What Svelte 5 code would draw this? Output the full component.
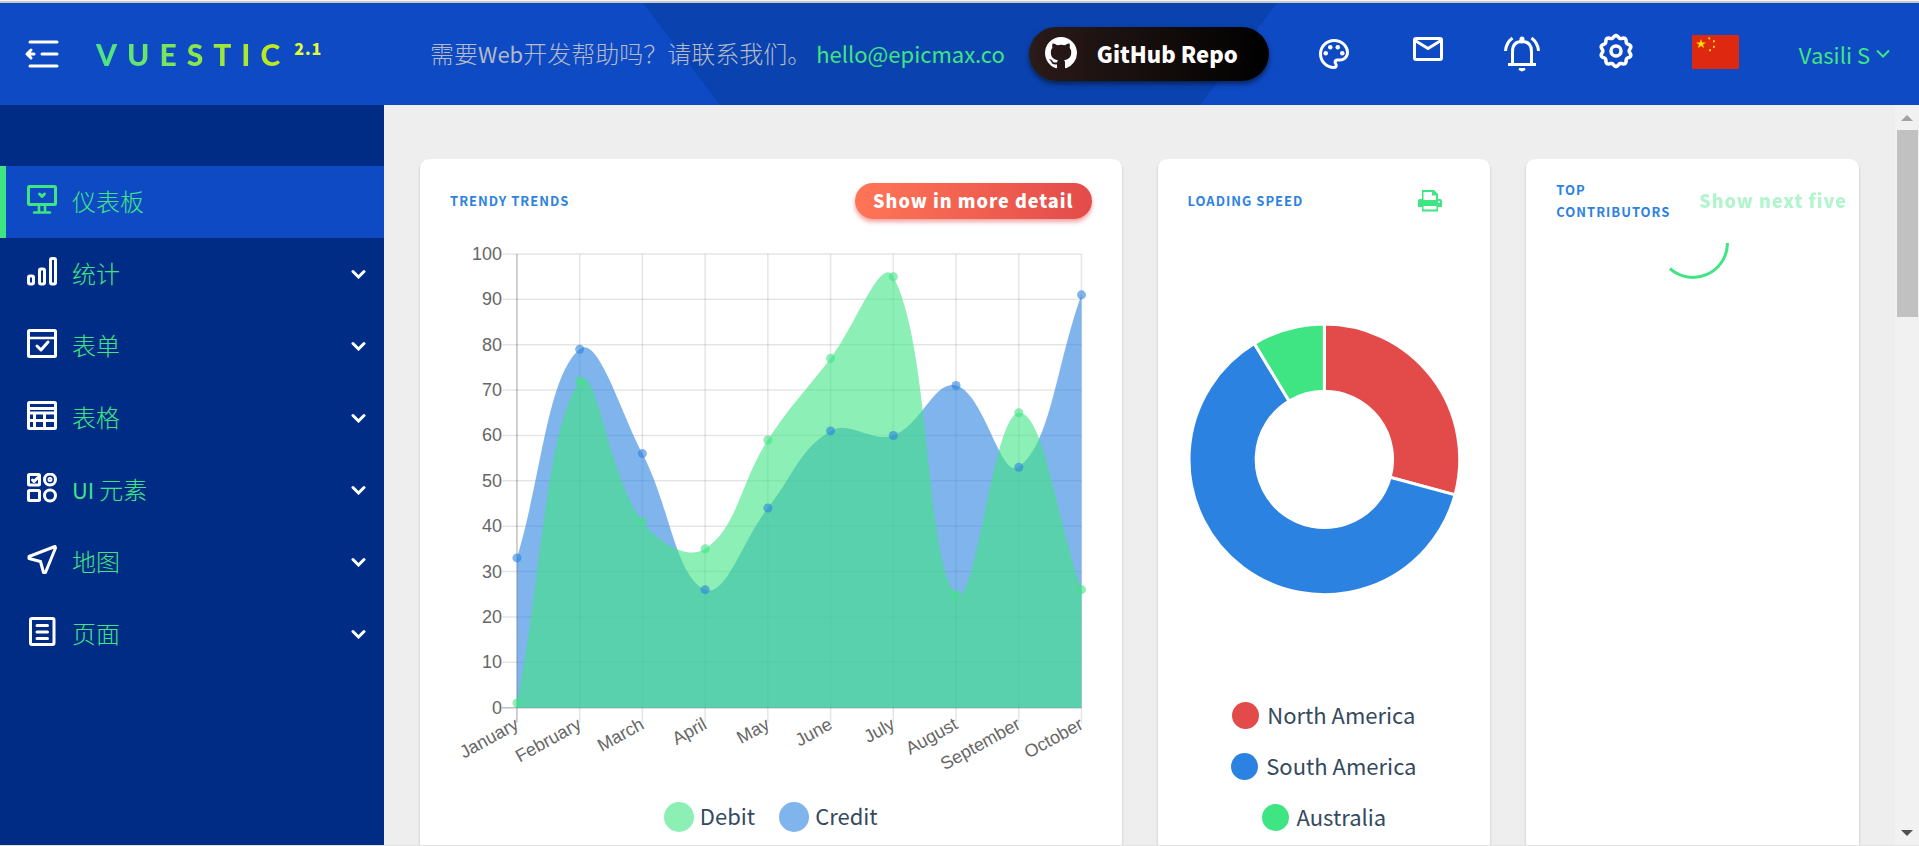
<script>
    const menu = [
        { label: '仪表板', icon: 'dashboard', active: true },
        { label: '统计', icon: 'stats' },
        { label: '表单', icon: 'forms' },
        { label: '表格', icon: 'tables' },
        { latin: 'UI ', label: '元素', icon: 'ui' },
        { label: '地图', icon: 'maps' },
        { label: '页面', icon: 'pages' }
    ];

    const months = ['January', 'February', 'March', 'April', 'May', 'June', 'July', 'August', 'September', 'October'];
    const credit = [33, 79, 56, 26, 44, 61, 60, 71, 53, 91];
    const debit = [1, 72, 41, 35, 59, 77, 95, 25, 65, 26];

    const regions = [
        { name: 'North America', value: 2478, color: '#e34b4a' },
        { name: 'South America', value: 5267, color: '#2c82e0' },
        { name: 'Australia', value: 734, color: '#40e583' }
    ];

    // Plot area inside the 642 x 547 chart
    const left = 67;
    const right = 632;
    const top = 11;
    const bottom = 465;
    const ticks = [0, 10, 20, 30, 40, 50, 60, 70, 80, 90, 100];

    const px = (i) => left + (i * (right - left)) / (months.length - 1);
    const py = (v) => bottom - (v * (bottom - top)) / 100;
    const clamp = (v, lo, hi) => Math.min(hi, Math.max(lo, v));

    // Smooth area, control points are kept inside the plot
    function area(values, tension = 0.4) {
        const pts = values.map((v, i) => [px(i), py(v)]);
        const ctrl = pts.map((p, i) => {
            const prev = pts[i - 1] ?? p;
            const next = pts[i + 1] ?? p;
            const d1 = Math.hypot(p[0] - prev[0], p[1] - prev[1]);
            const d2 = Math.hypot(next[0] - p[0], next[1] - p[1]);
            const a = (tension * d1) / (d1 + d2);
            const b = (tension * d2) / (d1 + d2);
            const cap = (x, y) => [clamp(x, left, right), clamp(y, top, bottom)];
            return {
                before: cap(p[0] - a * (next[0] - prev[0]), p[1] - a * (next[1] - prev[1])),
                after: cap(p[0] + b * (next[0] - prev[0]), p[1] + b * (next[1] - prev[1]))
            };
        });
        let d = `M${left} ${bottom}L${pts[0]}`;
        for (let i = 1; i < pts.length; i++) {
            d += `C${ctrl[i - 1].after} ${ctrl[i].before} ${pts[i]}`;
        }
        return d + `L${right} ${bottom}Z`;
    }

    function donut(items, r = 135, hole = 68, c = 137) {
        const total = items.reduce((sum, item) => sum + item.value, 0);
        let angle = -Math.PI / 2;
        const at = (radius, a) => `${c + radius * Math.cos(a)} ${c + radius * Math.sin(a)}`;
        return items.map((item) => {
            const end = angle + (item.value / total) * Math.PI * 2;
            const large = end - angle > Math.PI ? 1 : 0;
            const d = `M${at(r, angle)}A${r} ${r} 0 ${large} 1 ${at(r, end)}L${at(hole, end)}A${hole} ${hole} 0 ${large} 0 ${at(hole, angle)}Z`;
            angle = end;
            return { d, color: item.color };
        });
    }

    const slices = donut(regions);

    // Wavy outline of the settings icon
    const gear = Array.from({ length: 120 }, (_, i) => {
        const a = (i / 120) * Math.PI * 2;
        const r = 14.3 + 1.2 * Math.cos(10 * (a - Math.PI / 2));
        return `${(18 + r * Math.cos(a)).toFixed(2)},${(18 + r * Math.sin(a)).toFixed(2)}`;
    }).join(' ');
</script>

<div class="page">
    <div class="window-edge"></div>

    <header>
        <svg class="shape" viewBox="0 0 634 102" preserveAspectRatio="none" aria-hidden="true">
            <path d="M0 0H634L557 102H77Z" fill="#0a43af" />
        </svg>

        <button class="icon-button toggle" aria-label="Menu">
            <svg width="36" height="36" viewBox="0 0 36 36" fill="none" stroke="#fff" stroke-width="3" stroke-linecap="round">
                <path d="M6 6H33M18 18H33M6 30H33" />
                <path d="M3 18H10M7 14L3 18L7 22" stroke-linejoin="round" />
            </svg>
        </button>
        <a class="logo" href="/"><span class="word">VUESTIC</span><sup>2.1</sup></a>

        <p class="help">
            <span class="cjk">需要</span>Web<span class="cjk">开发帮助吗？请联系我们。</span>
            <a href="mailto:hello@epicmax.co">hello@epicmax.co</a>
        </p>

        <button class="github">
            <svg width="32" height="32" viewBox="0 0 16 16" fill="#fff">
                <path d="M8 0C3.58 0 0 3.58 0 8c0 3.54 2.29 6.53 5.47 7.59.4.07.55-.17.55-.38 0-.19-.01-.82-.01-1.49-2.01.37-2.53-.49-2.69-.94-.09-.23-.48-.94-.82-1.13-.28-.15-.68-.52-.01-.53.63-.01 1.08.58 1.23.82.72 1.21 1.87.87 2.33.66.07-.52.28-.87.51-1.07-1.78-.2-3.64-.89-3.64-3.95 0-.87.31-1.59.82-2.15-.08-.2-.36-1.02.08-2.12 0 0 .67-.21 2.2.82.64-.18 1.32-.27 2-.27.68 0 1.36.09 2 .27 1.53-1.04 2.2-.82 2.2-.82.44 1.1.16 1.92.08 2.12.51.56.82 1.27.82 2.15 0 3.07-1.87 3.75-3.65 3.95.29.25.54.73.54 1.48 0 1.07-.01 1.93-.01 2.2 0 .21.15.46.55.38A8.013 8.013 0 0016 8c0-4.42-3.58-8-8-8z" />
            </svg>
            GitHub Repo
        </button>

        <div class="actions">
            <button class="icon-button" aria-label="Theme">
                <svg width="36" height="36" viewBox="0 0 24 24" fill="#fff">
                    <path d="M12 22C6.490 22 2 17.510 2 12S6.490 2 12 2s10 4.040 10 9c0 3.310-2.690 6-6 6h-1.770c-.28 0-.5.22-.5.5 0 .12.05.23.13.33.41.47.64 1.060.64 1.670A2.500 2.500 0 0112 22zm0-18c-4.410 0-8 3.590-8 8s3.590 8 8 8c.28 0 .5-.22.5-.5a.54.54 0 00-.14-.35c-.41-.46-.63-1.050-.63-1.650a2.500 2.500 0 012.500-2.500H16c2.210 0 4-1.790 4-4 0-3.860-3.590-7-8-7z" />
                    <circle cx="6.500" cy="11.500" r="1.500" />
                    <circle cx="9.500" cy="7.500" r="1.500" />
                    <circle cx="14.500" cy="7.500" r="1.500" />
                    <circle cx="17.500" cy="11.500" r="1.500" />
                </svg>
            </button>
            <button class="icon-button" aria-label="Messages">
                <svg width="36" height="36" viewBox="0 0 36 36" fill="none" stroke="#fff" stroke-width="3">
                    <rect x="4.500" y="2.500" width="27" height="21" rx="1.500" />
                    <path d="M5 4.500L18 12.500L31 4.500" />
                </svg>
            </button>
            <button class="icon-button" aria-label="Notifications">
                <svg width="38" height="38" viewBox="0 0 38 38" fill="none" stroke="#fff" stroke-width="3">
                    <path d="M5 29.500H33M9.500 29V16.500C9.500 10 13 6.500 19 6.500S28.500 10 28.500 16.500V29" />
                    <path d="M2.500 16C3 10 5.500 6 9.500 3M35.500 16C35 10 32.500 6 28.500 3" />
                    <path d="M19 4V6" stroke-width="5" stroke-linecap="round" />
                    <path d="M16 34H22L19 35.500Z" fill="#fff" stroke-width="2" />
                </svg>
            </button>
            <button class="icon-button" aria-label="Settings">
                <svg width="36" height="42" viewBox="0 0 36 42" fill="none" stroke="#fff" stroke-width="3.500" stroke-linejoin="round">
                    <polygon points={gear} />
                    <circle cx="18" cy="18" r="5" />
                </svg>
            </button>
            <button class="icon-button flag" aria-label="Language">
                <svg width="47" height="38" viewBox="0 0 47 38">
                    <rect width="47" height="34" fill="#de2910" />
                    <path d="M9 4L10.200 7.400H14L11 9.600L12.100 13L9 10.900L5.900 13L7 9.600L4 7.400H7.800Z" fill="#ffde00" />
                    <g fill="#ffde00">
                        <path d="M17.500 2l1 2-1.500.8-1-2zM21 5.500l1.500-.5.5 2-2 .5zM21 11l1.500-.5.5 2-2 .5zM17 14.500l1.800-.5.2 2-2 .3z" />
                    </g>
                </svg>
            </button>
        </div>

        <button class="user">
            Vasili S
            <svg width="14" height="10" viewBox="0 0 14 10" fill="none" stroke="#40e583" stroke-width="2">
                <path d="M1 1.500L7 7.500L13 1.500" />
            </svg>
        </button>
    </header>

    <div class="body">
        <nav>
            {#each menu as item}
                <a class="item" class:active={item.active} href="#{item.icon}">
                    <svg width="30" height="30" viewBox="0 0 30 30" fill="none" stroke="currentColor" stroke-width="3" stroke-linejoin="round" stroke-linecap="round">
                        {#if item.icon === 'dashboard'}
                            <rect x="1.500" y="1.500" width="27" height="18" rx="1" />
                            <path d="M12 21V27M18 21V27M7 27.500H23" stroke-width="2.600" />
                            <path d="M12.500 9L15 11.500L17.500 9" />
                        {:else if item.icon === 'stats'}
                            <rect x="1.500" y="19" width="5" height="8" rx="1.500" />
                            <rect x="12.500" y="12" width="5" height="15" rx="1.500" />
                            <rect x="23.500" y="1.500" width="5" height="25.500" rx="1.500" />
                        {:else if item.icon === 'forms'}
                            <rect x="1.500" y="1.500" width="27" height="26" rx="1" />
                            <path d="M2 9H28" stroke-width="2.500" />
                            <path d="M10 17L14 21L21 13" />
                        {:else if item.icon === 'tables'}
                            <rect x="1.500" y="1.500" width="27" height="26" rx="1" />
                            <path d="M2 7.500H28M2 12H28M2 19.500H28M7.500 12V27M17.500 12V27" stroke-width="3" />
                        {:else if item.icon === 'ui'}
                            <rect x="1.500" y="1.500" width="11" height="10.500" rx="1" />
                            <path d="M5.500 7L7 8.500L11 4.500" />
                            <circle cx="23" cy="6.500" r="5.500" />
                            <circle cx="23" cy="6.500" r="1" />
                            <rect x="1.500" y="17.500" width="11" height="10" rx="1" />
                            <circle cx="23" cy="22.500" r="5.500" />
                        {:else if item.icon === 'maps'}
                            <path d="M28 1.500L2 11.500V13.500L13.500 16.500L16.500 27.500H18.500L28.500 3Z" />
                        {:else}
                            <rect x="3.500" y="1.500" width="23.500" height="26" rx="1.500" />
                            <path d="M10 8.500H20.500M10 15H20.500M10 21.500H20.500" />
                        {/if}
                    </svg>
                    <span class="label">{#if item.latin}<span class="latin">{item.latin}</span>{/if}{item.label}</span>
                    {#if !item.active}
                        <svg class="arrow" width="15" height="10" viewBox="0 0 15 10" fill="none" stroke="#fff" stroke-width="3" stroke-linecap="round">
                            <path d="M2 2.500L7.500 8L13 2.500" />
                        </svg>
                    {/if}
                </a>
            {/each}
        </nav>

        <main>
            <section class="card wide">
                <div class="card-header">
                    <h2>Trendy trends</h2>
                    <button class="detail">Show in more detail</button>
                </div>
                <svg class="chart" viewBox="0 0 642 547">
                    <g stroke="rgba(0, 0, 0, 0.1)" stroke-width="1.500">
                        {#each ticks as t}
                            <path d="M{left - 15} {py(t)}H{right}" stroke={t === 0 ? 'rgba(0, 0, 0, 0.25)' : undefined} />
                        {/each}
                        {#each months as _, i}
                            <path d="M{px(i)} {top}V{bottom + 15}" stroke={i === 0 ? 'rgba(0, 0, 0, 0.25)' : undefined} />
                        {/each}
                    </g>
                    <path d={area(credit)} fill="#2c82e0" fill-opacity="0.6" />
                    <path d={area(debit)} fill="#40e583" fill-opacity="0.6" />
                    {#each credit as v, i}
                        <circle cx={px(i)} cy={py(v)} r="4.500" fill="#2c82e0" fill-opacity="0.6" />
                    {/each}
                    {#each debit as v, i}
                        <circle cx={px(i)} cy={py(v)} r="4.500" fill="#40e583" fill-opacity="0.6" />
                    {/each}
                    <g class="axis">
                        {#each ticks as t}
                            <text x={left - 15} y={py(t) + 6}>{t}</text>
                        {/each}
                        {#each months as month, i}
                            <text transform="translate({px(i)} {bottom + 15}) rotate(-29)" x="0" y="6">{month}</text>
                        {/each}
                    </g>
                </svg>
                <ul class="legend row">
                    <li><i class="dot debit"></i><span>Debit</span></li>
                    <li><i class="dot credit"></i><span>Credit</span></li>
                </ul>
            </section>

            <section class="card">
                <div class="card-header">
                    <h2>Loading speed</h2>
                    <button class="icon-button print" aria-label="Print">
                        <svg width="24" height="22" viewBox="0 0 24 22">
                            <path d="M4 0H16L20 4V9H22Q24 9 24 11V17H20V21.500H4V17H0V11Q0 9 2 9H4Z" fill="#40e583" />
                            <path d="M5.500 2H14V5.500H18V10H5.500ZM5.500 16H18.500V19.500H5.500Z" fill="#fff" />
                            <circle cx="21" cy="12" r="1" fill="#fff" />
                        </svg>
                    </button>
                </div>
                <div class="donut">
                    <svg viewBox="1 1 272 272">
                        {#each slices as slice}
                            <path d={slice.d} fill={slice.color} stroke="#fff" stroke-width="3" />
                        {/each}
                    </svg>
                </div>
                <ul class="legend">
                    {#each regions as region}
                        <li><i class="dot" style="background: {region.color}"></i><span>{region.name}</span></li>
                    {/each}
                </ul>
            </section>

            <section class="card">
                <div class="card-header contributors">
                    <h2>Top contributors</h2>
                    <button class="next" disabled>Show next five</button>
                </div>
                <svg class="spinner" width="72" height="36" viewBox="0 0 72 36" fill="none" stroke="#40e583" stroke-width="3">
                    <path d="M70.500 0A34.500 34.500 0 0 1 13 25.600" />
                </svg>
            </section>
        </main>

        <div class="scrollbar" aria-hidden="true">
            <svg width="12" height="6" viewBox="0 0 12 6"><path d="M0 6L6 0L12 6Z" fill="#a3a3a3" /></svg>
            <div class="track"><div class="thumb"></div></div>
            <svg width="12" height="6" viewBox="0 0 12 6"><path d="M0 0L6 6L12 0Z" fill="#505050" /></svg>
        </div>
    </div>
</div>

<style>
    :global(body) {
        margin: 0;
        overflow: hidden;
    }

    .page {
        height: 100vh;
        display: flex;
        flex-direction: column;
        box-sizing: border-box;
        border-bottom: 1px solid #e4e4e4;
        font-family: "Noto Sans CJK SC", sans-serif;
        font-size: 22px;
        color: #34495e;
    }

    .page :global(svg) {
        display: block;
        flex-shrink: 0;
    }

    button {
        font: inherit;
        border: 0;
        padding: 0;
        background: none;
        white-space: nowrap;
    }

    a {
        text-decoration: none;
    }

    .window-edge {
        height: 1px;
        background: #f3f3f3;
        border-bottom: 2px solid #c9c9c9;
    }

    header {
        position: relative;
        display: flex;
        align-items: center;
        height: 102px;
        flex-shrink: 0;
        padding: 0 29px 0 24px;
        box-sizing: border-box;
        background: #0e4ac4;
    }

    header > :not(.shape) {
        position: relative;
    }

    /* Darker trapezoid behind the middle of the bar */
    .shape {
        position: absolute;
        left: 50%;
        top: 0;
        width: 634px;
        height: 100%;
        transform: translateX(-50%);
    }

    .icon-button {
        display: flex;
        justify-content: center;
        align-items: center;
    }

    .logo {
        display: flex;
        align-items: flex-start;
        margin-left: 36px;
        gap: 4px;
    }

    .word {
        font-family: Lato, sans-serif;
        font-weight: 900;
        font-size: 30px;
        line-height: 36px;
        letter-spacing: 10px;
        background: linear-gradient(90deg, #4ae387, #c8ea13);
        background-clip: text;
        -webkit-background-clip: text;
        color: transparent;
    }

    sup {
        font-size: 16px;
        line-height: 24px;
        font-weight: 900;
        letter-spacing: 1px;
        color: #e4ff32;
    }

    .help {
        margin: 0 24px 0 auto;
        padding-bottom: 2px;
        line-height: 36px;
        color: #b4bac8;
        white-space: nowrap;
    }

    .help .cjk {
        font-size: 24px;
        font-weight: 300;
    }

    .help a {
        color: #40e583;
    }

    .github {
        display: flex;
        align-items: center;
        gap: 20px;
        height: 54px;
        width: 240px;
        padding: 0 0 2px 16px;
        border-radius: 27px;
        font-weight: 900;
        color: #fff;
        background: linear-gradient(90deg, #2b1b19, #000);
        box-shadow: 0 3px 5px rgba(0, 0, 0, 0.5);
    }

    .actions {
        display: flex;
        align-items: center;
        margin-left: 18px;
    }

    .actions .icon-button {
        width: 94px;
    }

    .actions .flag {
        width: 106px;
    }

    .user {
        display: flex;
        align-items: center;
        gap: 6px;
        margin-left: 30px;
        color: #40e583;
    }

    .body {
        display: flex;
        flex: 1;
        min-height: 0;
        overflow: hidden;
    }

    nav {
        width: 384px;
        flex-shrink: 0;
        box-sizing: border-box;
        padding-top: 61px;
        background: #002c85;
    }

    .item {
        display: flex;
        align-items: center;
        height: 72px;
        box-sizing: border-box;
        padding: 0 18px 4px 27px;
        color: #fff;
    }

    .item.active {
        padding-left: 21px;
        border-left: 6px solid #40e583;
        background: #0e4ac4;
        color: #40e583;
    }

    .arrow {
        margin-top: 4px;
    }

    .label {
        flex: 1;
        margin-left: 15px;
        font-size: 24px;
        font-weight: 300;
        color: #40e583;
    }

    .latin {
        font-size: 22px;
        font-weight: 400;
    }

    main {
        flex: 1;
        min-width: 0;
        display: grid;
        grid-template-columns: repeat(12, 1fr);
        gap: 36px;
        padding: 54px 36px 0;
        background: #eee;
    }

    .card {
        grid-column: span 3;
        min-width: 0;
        height: 740px;
        border-radius: 9px;
        background: #fff;
        box-shadow: 0 2px 3px rgba(0, 0, 0, 0.2);
    }

    .card.wide {
        grid-column: span 6;
    }

    .card-header {
        display: flex;
        align-items: center;
        justify-content: space-between;
        height: 84px;
        padding: 0 30px;
    }

    h2 {
        margin: 0;
        font-size: 13px;
        line-height: 22px;
        font-weight: 700;
        letter-spacing: 1px;
        text-transform: uppercase;
        color: #2c82e0;
    }

    .detail,
    .next {
        height: 36px;
        padding: 0 18px 2px;
        font-size: 18px;
        line-height: 34px;
        font-weight: 900;
        letter-spacing: 1px;
    }

    .detail {
        border-radius: 18px;
        color: #fff;
        background: linear-gradient(90deg, #ff7557, #e34b4a);
        box-shadow: 0 3px 4px rgba(227, 75, 74, 0.5);
    }

    .contributors {
        padding-right: 12px;
        gap: 12px;
    }

    .next {
        padding: 0 0 2px;
        color: #40e583;
        opacity: 0.4;
    }

    .print {
        padding-right: 18px;
    }

    .chart {
        width: calc(100% - 60px);
        margin: 0 auto;
    }

    .axis text {
        font-family: "Liberation Sans", Arial, sans-serif;
        font-size: 18px;
        text-anchor: end;
        fill: #666;
    }

    .donut {
        height: 432px;
        display: flex;
        align-items: center;
        justify-content: center;
    }

    .donut svg {
        width: calc(100% - 60px);
    }

    .legend {
        display: flex;
        flex-direction: column;
        align-items: center;
        list-style: none;
        margin: 0;
        padding: 15px 0 0;
    }

    .legend li {
        display: flex;
        align-items: center;
        gap: 8px;
        height: 51px;
    }

    .legend span {
        padding-bottom: 4px;
    }

    .dot {
        width: 27px;
        height: 27px;
        border-radius: 50%;
    }

    .legend.row {
        flex-direction: row;
        justify-content: center;
        gap: 24px;
        padding: 2px 0 0;
    }

    .row .dot {
        width: 30px;
        height: 30px;
    }

    .row li {
        gap: 6px;
    }

    .debit {
        background: #8cf0b5;
    }

    .credit {
        background: #80b4ec;
    }

    .spinner {
        margin: 0 auto;
    }

    .scrollbar {
        width: 24px;
        flex-shrink: 0;
        display: flex;
        flex-direction: column;
        align-items: center;
        padding: 10px 0 9px;
        box-sizing: border-box;
        background: #f1f1f1;
    }

    .track {
        flex: 1;
        width: 21px;
        padding: 9px 0;
    }

    .thumb {
        height: 27%;
        background: #c1c1c1;
    }
</style>
